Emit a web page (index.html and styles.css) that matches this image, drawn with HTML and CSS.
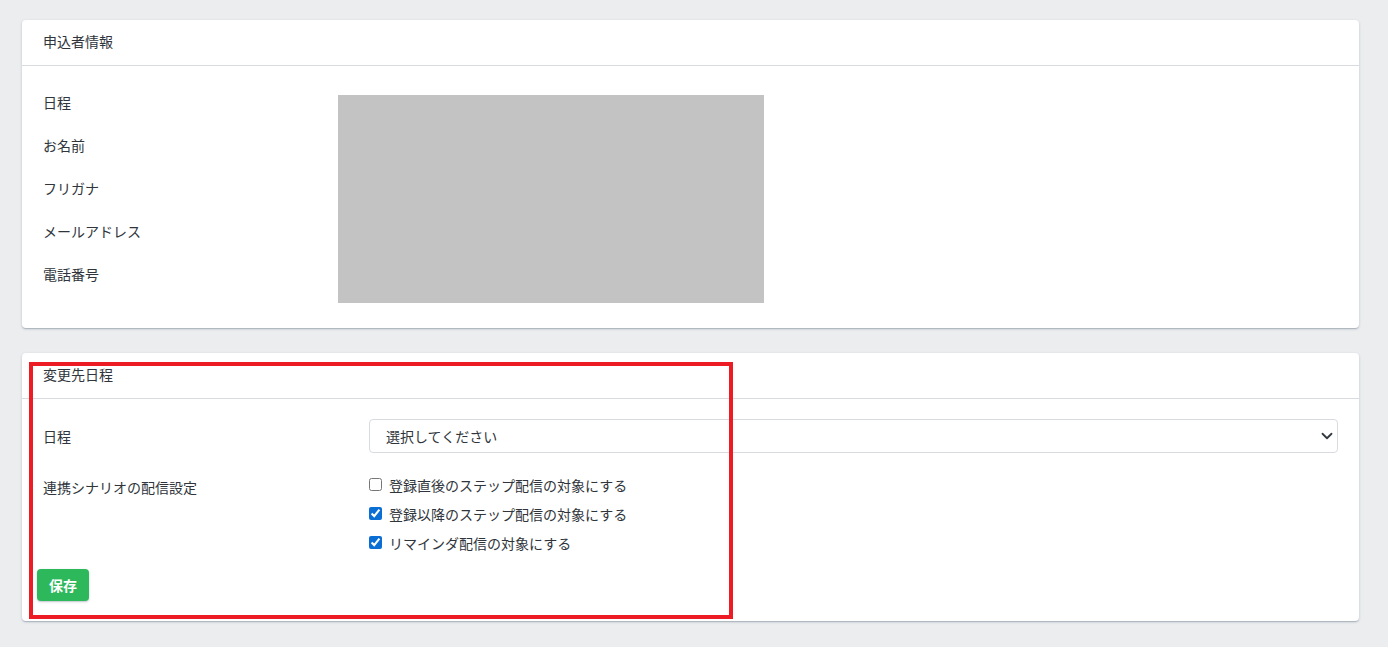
FILE: index.html
```html
<!DOCTYPE html>
<html lang="ja">
<head>
    <meta charset="UTF-8">
    <meta name="viewport" content="width=device-width, initial-scale=1.0">
    <title>日程変更</title>
    <link rel="stylesheet" href="styles.css">
</head>
<body>
    <main class="page">
        <section class="card">
            <div class="card-header">申込者情報</div>
            <div class="card-body info-body">
                <div class="info-labels">
                    <div class="info-label">日程</div>
                    <div class="info-label">お名前</div>
                    <div class="info-label">フリガナ</div>
                    <div class="info-label">メールアドレス</div>
                    <div class="info-label">電話番号</div>
                </div>
                <div class="masked"></div>
            </div>
        </section>

        <section class="card card-change">
            <div class="card-header">変更先日程</div>
            <div class="card-body">
                <div class="form-row">
                    <label class="form-label" for="schedule">日程</label>
                    <div class="select-wrap">
                        <select id="schedule" class="form-select">
                            <option>選択してください</option>
                        </select>
                        <svg class="select-arrow" width="12" height="12" viewBox="0 0 16 16">
                            <path d="M2 5l6 6 6-6" fill="none" stroke="#343a40" stroke-width="2.4" stroke-linecap="round" stroke-linejoin="round"/>
                        </svg>
                    </div>
                </div>
                <div class="form-row form-row-checks">
                    <div class="form-label label-checks">連携シナリオの配信設定</div>
                    <div class="checks">
                        <label class="check"><input type="checkbox">登録直後のステップ配信の対象にする</label>
                        <label class="check"><input type="checkbox" checked>登録以降のステップ配信の対象にする</label>
                        <label class="check"><input type="checkbox" checked>リマインダ配信の対象にする</label>
                    </div>
                </div>
                <button class="btn-save">保存</button>
            </div>
            <div class="highlight"></div>
        </section>
    </main>
</body>
</html>
```

FILE: styles.css
```css
:root {
    --bg-color: #ebedef;
    --text-color: #2f353b;
    --border-color: #d8dbe0;
    --success-color: #2eb85c;
}

* {
    box-sizing: border-box;
}

body {
    margin: 0;
    background: var(--bg-color);
    color: var(--text-color);
    font-family: 'Noto Sans CJK JP', 'Noto Sans', sans-serif;
    font-size: 14px;
    line-height: 20px;
}

.page {
    padding: 20px 29px 20px 22px;
}

.card {
    position: relative;
    background: #fff;
    border-radius: 4px;
    box-shadow: 0 1px 1px rgba(60, 75, 100, 0.14), 0 2px 1px -1px rgba(60, 75, 100, 0.12), 0 1px 3px rgba(60, 75, 100, 0.2);
    margin-bottom: 25px;
}

.card-header {
    height: 46px;
    padding: 11px 21px 0;
    border-bottom: 1px solid var(--border-color);
}

.card-body {
    padding: 20px 21px 20px;
}

.info-body {
    display: flex;
    padding-top: 27px;
    padding-bottom: 25px;
}

.info-labels {
    width: 295px;
    margin-top: -1px;
}

.info-label {
    height: 43px;
}

.info-label:last-child {
    height: 20px;
}

.masked {
    width: 426px;
    height: 208px;
    margin-top: 2px;
    background: #c3c3c3;
}

.form-row {
    display: grid;
    grid-template-columns: 326px 1fr;
    align-items: center;
}

.select-wrap {
    position: relative;
}

.form-select {
    width: 100%;
    height: 34px;
    padding: 0 16px;
    border: 1px solid var(--border-color);
    border-radius: 4px;
    background: #fff;
    color: var(--text-color);
    font-family: inherit;
    font-size: 14px;
    appearance: none;
}

.select-arrow {
    position: absolute;
    right: 5px;
    top: 11px;
}

.form-row-checks {
    align-items: start;
    margin-top: 17px;
}

.label-checks {
    padding-top: 7px;
}

.checks {
    display: flex;
    flex-direction: column;
}

.check {
    display: flex;
    align-items: center;
    height: 29px;
}

.check input {
    width: 13px;
    height: 13px;
    margin: 0 7px 0 0;
    accent-color: #0b6ed4;
}

.btn-save {
    display: block;
    margin: 12px 0 0 -6px;
    width: 52px;
    height: 32px;
    border: none;
    border-radius: 4px;
    background: var(--success-color);
    color: #fff;
    font-family: inherit;
    font-size: 14px;
    font-weight: bold;
    box-shadow: 0 1px 1px rgba(60, 75, 100, 0.14), 0 1px 3px rgba(60, 75, 100, 0.2);
}

.highlight {
    position: absolute;
    left: 7px;
    top: 9px;
    width: 704px;
    height: 257px;
    border: 4px solid #ed1c24;
    pointer-events: none;
}
```
